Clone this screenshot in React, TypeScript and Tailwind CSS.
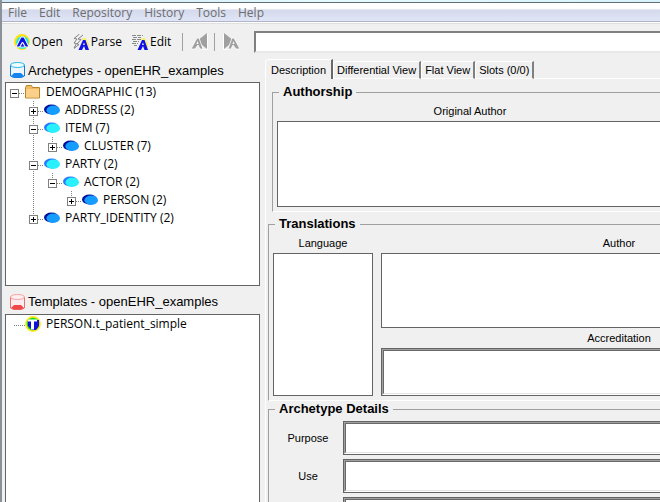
import React, { useState } from "react";

const UI = "font-['Open_Sans','Noto_Sans',sans-serif]";
const ARIAL = "font-['Liberation_Sans',Arial,sans-serif]";

function OpenIcon() {
  return (
    <svg width="16" height="16" viewBox="0 0 16 16" aria-hidden="true">
      <circle cx="8" cy="8" r="7.900" fill="#ffe000" />
      <circle cx="8.500" cy="8.500" r="6.300" fill="#10e8f8" />
      <path d="M7 3h3l5 10h-3.500L8.500 8l-3 5H2z" fill="#1010e0" stroke="#fff" strokeWidth="1" />
      <path d="M8.500 8.500l2.500 4.500H6z" fill="#1010e0" stroke="#fff" strokeWidth=".8" />
    </svg>
  );
}

function SmallA() {
  return (
    <g>
      <path d="M9 4h4l3 6v5l-5-4z" fill="#f7ee74" />
      <path d="M10 6h2.500l3.500 10h-3.500l-1.500-4-2 4H5.500z" fill="#1010e8" />
      <path d="M11 8.500l.8 2.500h-1.800z" fill="#fff" />
    </g>
  );
}

function ParseIcon() {
  return (
    <svg width="16" height="16" viewBox="0 0 16 16" aria-hidden="true">
      <path d="M6.500 0L1 4.500l3 .5-3 4 2.500.5L1 14M10 1L5 5l3 .5-4 4.500 2 .5L1 14.500" fill="none" stroke="#808080" />
      <SmallA />
    </svg>
  );
}

function EditIcon() {
  return (
    <svg width="16" height="16" viewBox="0 0 16 16" aria-hidden="true">
      <path d="M0 1.500h11M1 3.500h8M0 5.500h9M1 7.500h6M0 9.500h6M2 11.500h3" stroke="#888" strokeDasharray="4 1" />
      <SmallA />
    </svg>
  );
}

function HistoryIcon({ forward = false }: { forward?: boolean }) {
  return (
    <svg width="17" height="17" viewBox="0 0 17 17" aria-hidden="true">
      <g transform={forward ? "translate(17 0) scale(-1 1)" : undefined}>
        <path d="M16 0v16L6 8z" fill="#a0a0a0" />
        <path d="M16.500 1v15.500h-4" fill="none" stroke="#fff" />
        <path d="M6 5h2l4 11H9l-2-4-3 4H0z" fill="#a0a0a0" stroke="#fff" strokeWidth=".8" />
        <path d="M6.500 8l1 3h-2z" fill="#fff" />
      </g>
    </svg>
  );
}

function DbIcon({ red = false }: { red?: boolean }) {
  const line = red ? "#f07070" : "#1878d8";
  return (
    <svg width="17" height="17" viewBox="0 0 17 17" aria-hidden="true">
      <path d="M1.500 3v11l3 1.500h8l3-1.500V3" fill={red ? "#f8ecec" : "#eef6fc"} stroke={line} />
      <path d="M2 14l3-3h7l3 3-3 1.500H5z" fill={red ? "#f04848" : "#1484f0"} />
      <ellipse cx="8.500" cy="3" rx="7" ry="2.500" fill={red ? "#fff0f0" : "#f0fcff"} stroke={red ? "#f8a0a0" : "#28b8e8"} />
    </svg>
  );
}

function FolderIcon() {
  return (
    <svg width="16" height="16" viewBox="0 0 16 16" aria-hidden="true">
      <path d="M.5 3.500l1-2h5l1 2h7v10.500H.5z" fill="#f0bc62" stroke="#b9832c" />
      <path d="M1 5h13v8.500H1z" fill="#fbd08a" />
    </svg>
  );
}

function Ellipse({ abstract = false }: { abstract?: boolean }) {
  return (
    <svg width="16" height="16" viewBox="0 0 16 16" aria-hidden="true">
      <ellipse cx="7.500" cy="7.500" rx="7.500" ry="5" fill={abstract ? "#2878ff" : "#00109c"} />
      <ellipse cx="9.200" cy="8.300" rx="6.800" ry="4.700" fill={abstract ? "#28f0ff" : "#149cff"} />
    </svg>
  );
}

function TemplateIcon() {
  return (
    <svg width="16" height="16" viewBox="0 0 16 16" aria-hidden="true">
      <circle cx="8" cy="8" r="7.900" fill="#ffe81a" />
      <circle cx="8" cy="8" r="6.300" fill="#10d828" />
      <path d="M3 4h11v6l-3 4H7L3 10z" fill="#1010d8" />
      <path d="M3 3.500h9v2H9v8H6v-8H3z" fill="#fff" />
    </svg>
  );
}

type Cell = "blank" | "line" | "plus" | "minus" | "plusLast" | "minusLast" | "root" | "leaf";

function TreeCell({ kind }: { kind: Cell }) {
  const box = kind !== "blank" && kind !== "line" && kind !== "leaf";
  const plus = kind.startsWith("plus");
  const above = box && kind !== "root";
  const below = kind === "plus" || kind === "minus";
  return (
    <svg width="19" height="18" viewBox="0 0 19 18" aria-hidden="true" shapeRendering="crispEdges">
      <g stroke="#808080" strokeDasharray="1 1">
        {kind === "line" && <path d="M8.500 0v18" />}
        {above && <path d="M8.500 0v6" />}
        {below && <path d="M8.500 14v4" />}
        {kind !== "blank" && kind !== "line" && <path d={box ? "M13 10.500h6" : "M8 10.500h11"} />}
      </g>
      {box && (
        <>
          <rect x="4.500" y="6.500" width="8" height="8" fill="#fff" stroke="#808080" />
          <path d={plus ? "M6 10.500h5M8.500 8v5" : "M6 10.500h5"} stroke="#000" />
        </>
      )}
    </svg>
  );
}

interface Node {
  label: string;
  cells: Cell[];
  icon: React.ReactNode;
}

const archetypes: Node[] = [
  { label: "DEMOGRAPHIC (13)", cells: ["root"], icon: <FolderIcon /> },
  { label: "ADDRESS (2)", cells: ["blank", "plus"], icon: <Ellipse /> },
  { label: "ITEM (7)", cells: ["blank", "minus"], icon: <Ellipse abstract /> },
  { label: "CLUSTER (7)", cells: ["blank", "line", "plusLast"], icon: <Ellipse /> },
  { label: "PARTY (2)", cells: ["blank", "minus"], icon: <Ellipse abstract /> },
  { label: "ACTOR (2)", cells: ["blank", "line", "minusLast"], icon: <Ellipse abstract /> },
  { label: "PERSON (2)", cells: ["blank", "line", "blank", "plusLast"], icon: <Ellipse /> },
  { label: "PARTY_IDENTITY (2)", cells: ["blank", "plusLast"], icon: <Ellipse /> },
];

const templates: Node[] = [
  { label: "PERSON.t_patient_simple", cells: ["leaf"], icon: <TemplateIcon /> },
];

function Tree({ nodes, label }: { nodes: Node[]; label: string }) {
  return (
    <ul role="tree" aria-label={label} className={`${UI} text-xs`}>
      {nodes.map((n) => (
        <li key={n.label} role="treeitem" aria-level={n.cells.length} className="flex h-[18px] items-center">
          {n.cells.map((c, i) =>
            i === n.cells.length - 1 && c !== "leaf" ? (
              <button key={i} type="button" aria-label={`Toggle ${n.label}`} className="shrink-0">
                <TreeCell kind={c} />
              </button>
            ) : (
              <TreeCell key={i} kind={c} />
            ),
          )}
          {n.icon}
          <span className="ml-[5px] whitespace-nowrap">{n.label}</span>
        </li>
      ))}
    </ul>
  );
}

function Group({ title, className, children }: { title: string; className: string; children: React.ReactNode }) {
  return (
    <fieldset className={`min-w-0 border border-r-0 border-t-[#a0a0a0] border-l-[#a0a0a0] border-b-white pl-1 ${className}`}>
      <legend className="ml-[2px] px-1 text-[13px] leading-4 font-bold">{title}</legend>
      {children}
    </fieldset>
  );
}

function ListBox({ label, className }: { label: string; className: string }) {
  return <div role="listbox" aria-label={label} className={`border border-[#646464] bg-white ${className}`} />;
}

function SunkenText({ id, label, className }: { id: string; label: string; className: string }) {
  return (
    <div className={`border border-[#646464] ${className}`}>
      <div className="h-full border border-t-[#a0a0a0] border-l-[#a0a0a0] border-r-white border-b-white">
        <textarea
          id={id}
          aria-label={label}
          className="block h-full w-full resize-none border border-t-[#696969] border-l-[#696969] border-r-[#e3e3e3] border-b-[#e3e3e3] bg-white outline-none"
        />
      </div>
    </div>
  );
}

function ToolButton({ icon, label }: { icon: React.ReactNode; label: string }) {
  return (
    <button type="button" className="flex items-center gap-[2px]">
      {icon}
      {label}
    </button>
  );
}

const tabs = ["Description", "Differential View", "Flat View", "Slots (0/0)"];
const details = [
  { id: "purpose", label: "Purpose" },
  { id: "use", label: "Use" },
];

export default function App() {
  const [tab, setTab] = useState(0);
  return (
    <div className="flex h-screen flex-col overflow-hidden border-l-2 border-[#8c9098] bg-[#f0f0f0] text-black">
      <div className="h-[2px] shrink-0 bg-gradient-to-r from-[#cfe6f5] via-[#e4fbff] to-[#d6f2fb]" />
      <nav className={`${UI} flex h-5 shrink-0 items-center gap-3 border-t border-b border-t-[#646c74] border-b-[#b0b4c8] bg-gradient-to-b from-white from-30% via-[#d4daec] via-40% to-[#e0e6f6] pt-[2px] pl-[6px] text-xs text-[#6d6d6d]`}>
        {["File", "Edit", "Repository", "History", "Tools", "Help"].map((m) => (
          <button key={m} type="button">{m}</button>
        ))}
      </nav>
      <div className="h-[2px] shrink-0 border-b border-[#e0e0e0] bg-white" />
      <div className={`${UI} flex h-[35px] shrink-0 items-center pl-3 text-xs`}>
        <div className="flex gap-[10px]">
          <ToolButton icon={<OpenIcon />} label="Open" />
          <ToolButton icon={<ParseIcon />} label="Parse" />
          <ToolButton icon={<EditIcon />} label="Edit" />
        </div>
        <div className="ml-[11px] h-[18px] w-px bg-[#a0a0a0]" />
        <button type="button" aria-label="Back" className="mr-[6px] ml-2"><HistoryIcon /></button>
        <div className="h-[18px] w-px bg-[#a0a0a0]" />
        <button type="button" aria-label="Forward" className="mr-[14px] ml-2"><HistoryIcon forward /></button>
        <input
          type="text"
          aria-label="Archetype id"
          className="h-[22px] min-w-0 flex-1 border-2 border-r-0 border-t-[#808080] border-l-[#808080] border-b-[#e8e8e8] bg-white px-1 outline-none"
        />
      </div>

      <div className="flex min-h-0 flex-1">
        <aside className={`${ARIAL} flex w-[258px] shrink-0 flex-col pl-[3px]`}>
          <h2 className="flex h-[23px] shrink-0 items-center gap-[2px] pl-1 text-[13px] whitespace-nowrap"><DbIcon />Archetypes - openEHR_examples</h2>
          <div className="h-[204px] shrink-0 border border-[#646464] bg-white">
            <Tree nodes={archetypes} label="Archetypes" />
          </div>
          <h2 className="flex h-7 shrink-0 items-center gap-[2px] pt-1 pl-1 text-[13px] whitespace-nowrap"><DbIcon red />Templates - openEHR_examples</h2>
          <div className="min-h-0 flex-1 border border-b-0 border-[#646464] bg-white">
            <Tree nodes={templates} label="Templates" />
          </div>
        </aside>

        <main className={`${ARIAL} ml-[5px] flex min-w-0 flex-1 flex-col overflow-hidden text-[11px] leading-4`}>
          <div role="tablist" className="flex h-5 shrink-0 items-end">
            {tabs.map((t, i) => (
              <button
                key={t}
                type="button"
                role="tab"
                aria-selected={tab === i}
                onClick={() => setTab(i)}
                className={
                  tab === i
                    ? "h-5 rounded-tl-sm border border-r-2 border-b-0 border-t-white border-l-white border-r-[#696969] px-[5px] whitespace-nowrap"
                    : "h-[18px] rounded-tl-sm border border-r-2 border-t-white border-l-white border-b-white border-r-[#808080] px-[3px] whitespace-nowrap"
                }
              >
                {t}
              </button>
            ))}
            <div className="h-px flex-1 bg-white" />
          </div>
          <div role="tabpanel" className="min-h-0 flex-1 overflow-hidden border-l border-white pt-[5px] pl-[2px]">
            <Group title="Authorship" className="ml-1 h-32">
              <div className="w-[386px]">
                <div className="mt-[3px] h-[18px] text-center">Original Author</div>
                <ListBox label="Original Author" className="h-[86px]" />
              </div>
            </Group>
            <Group title="Translations" className="mt-1 h-[185px]">
              <div className="mt-[3px] flex gap-2">
                <div className="w-[100px] shrink-0">
                  <div className="h-[18px] text-center">Language</div>
                  <ListBox label="Language" className="h-[143px]" />
                </div>
                <div className="w-[476px] shrink-0">
                  <div className="h-[18px] text-center">Author</div>
                  <ListBox label="Author" className="h-[75px]" />
                  <label htmlFor="accreditation" className="block h-5 pt-[2px] text-center">Accreditation</label>
                  <SunkenText id="accreditation" label="Accreditation" className="h-12" />
                </div>
              </div>
            </Group>
            <Group title="Archetype Details" className="">
              <div className="mt-1 -mr-2 flex flex-col gap-1">
                {details.map((d) => (
                  <div key={d.id} className="flex items-center">
                    <label htmlFor={d.id} className="w-[70px] shrink-0 text-center">{d.label}</label>
                    <SunkenText id={d.id} label={d.label} className="h-[34px] min-w-0 flex-1" />
                  </div>
                ))}
                <SunkenText id="misuse" label="Misuse" className="ml-[70px] h-[34px]" />
              </div>
            </Group>
          </div>
        </main>
      </div>
    </div>
  );
}
